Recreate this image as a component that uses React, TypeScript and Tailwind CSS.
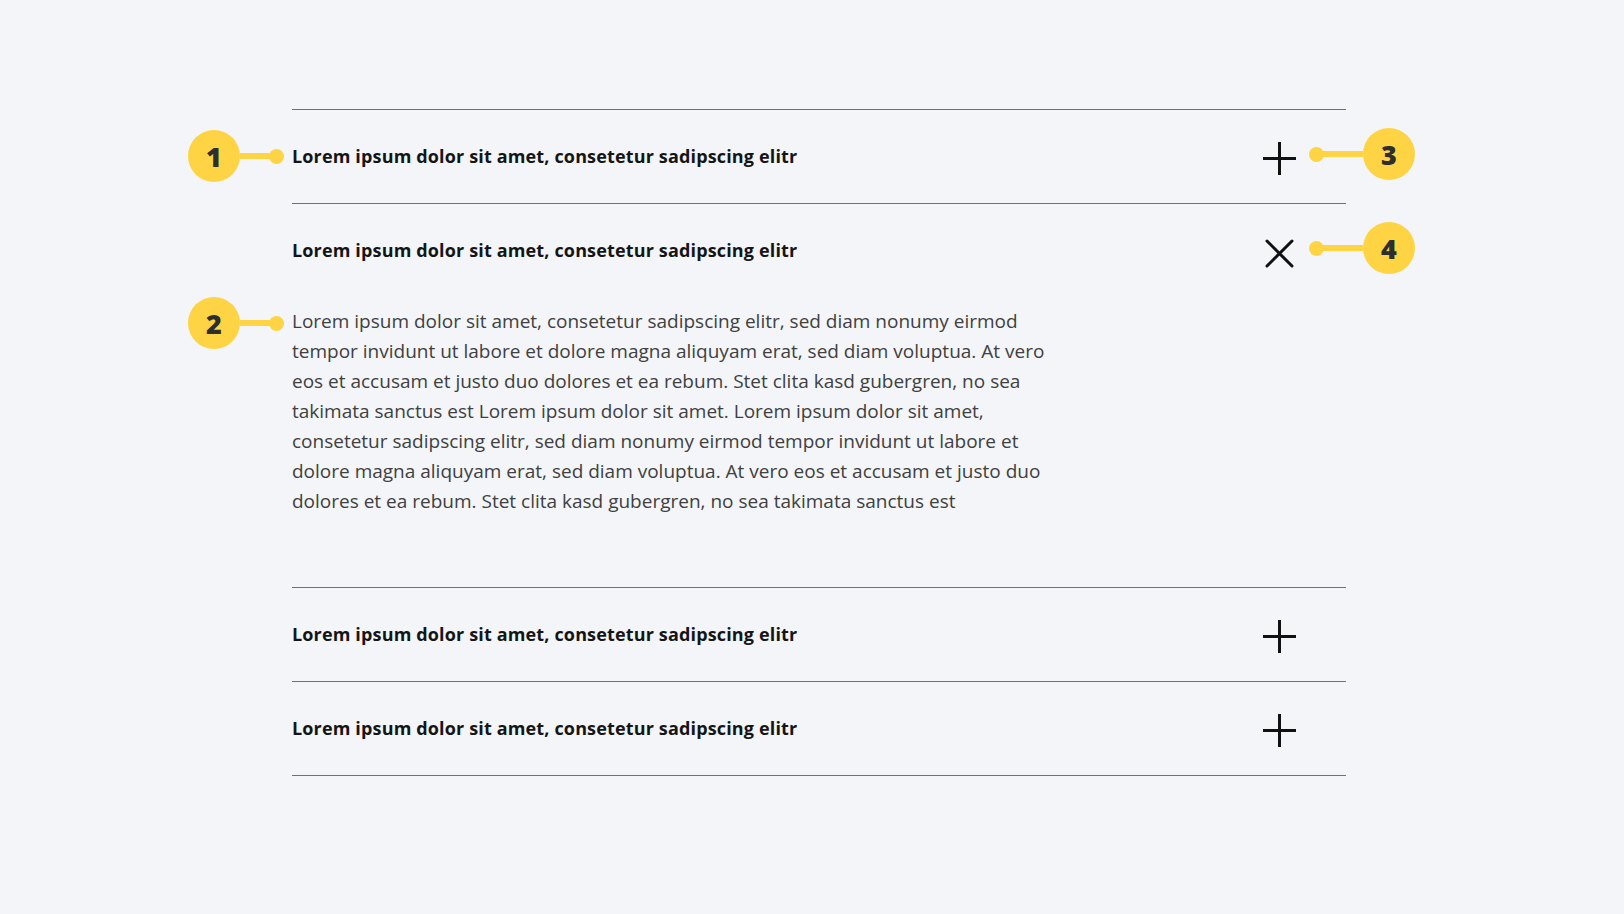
import React from 'react';

const body =
  'Lorem ipsum dolor sit amet, consetetur sadipscing elitr, sed diam nonumy eirmod tempor invidunt ut labore et dolore magna aliquyam erat, sed diam voluptua. At vero eos et accusam et justo duo dolores et ea rebum. Stet clita kasd gubergren, no sea takimata sanctus est Lorem ipsum dolor sit amet. Lorem ipsum dolor sit amet, consetetur sadipscing elitr, sed diam nonumy eirmod tempor invidunt ut labore et dolore magna aliquyam erat, sed diam voluptua. At vero eos et accusam et justo duo dolores et ea rebum. Stet clita kasd gubergren, no sea takimata sanctus est';

const title = 'Lorem ipsum dolor sit amet, consetetur sadipscing elitr';

const PlusIcon = () => (
  <svg className="mt-[4px]" width="33" height="33" viewBox="0 0 33 33" fill="none" stroke="#111" strokeWidth="3">
    <path d="M0 16.5h33M16.5 0v33" />
  </svg>
);

const CloseIcon = () => (
  <svg className="mt-[5px]" width="33" height="33" viewBox="0 0 33 33" fill="none" stroke="#111" strokeWidth="3" strokeLinecap="round">
    <path d="M4 4l25 25M29 4L4 29" />
  </svg>
);

const Circle = ({ n }: { n: string }) => (
  <div className="w-[52px] h-[52px] rounded-full bg-[#ffd444] flex items-center justify-center text-[27px] font-extrabold text-[#2e2e2e] leading-none">
    {n}
  </div>
);

// annotation markers sitting over the accordion
const Marker = ({ n, side, className }: { n: string; side: 'left' | 'right'; className: string }) => (
  <div className={`absolute flex items-center ${className}`}>
    {side === 'left' ? (
      <>
        <Circle n={n} />
        <div className="w-[31px] h-[6px] bg-[#ffd444] -mr-[2px]" />
        <div className="w-[15px] h-[15px] rounded-full bg-[#ffd444]" />
      </>
    ) : (
      <>
        <div className="w-[15px] h-[15px] rounded-full bg-[#ffd444]" />
        <div className="w-[41px] h-[6px] bg-[#ffd444] -ml-[2px]" />
        <Circle n={n} />
      </>
    )}
  </div>
);

const Row = ({ open, last }: { open?: boolean; last?: boolean }) => (
  <div className={`border-t border-[#707070] ${last ? 'border-b' : ''}`}>
    <div className="h-[93px] flex items-center justify-between pr-[50px]">
      <h3 className="text-[18px] font-bold text-[#151515] tracking-[0.15px]">{title}</h3>
      {open ? <CloseIcon /> : <PlusIcon />}
    </div>
    {open && (
      <p className="mt-[9px] pb-[71px] w-[775px] text-[19px] leading-[30px] text-[#404040]">{body}</p>
    )}
  </div>
);

export default function App() {
  return (
    <div className="min-h-screen bg-[#f3f5f9] pt-[109px] font-['Open_Sans',sans-serif]">
      <div className="relative ml-[292px] w-[1054px]">
        <Row />
        <Row open />
        <Row />
        <Row last />

        <Marker n="1" side="left" className="-left-[104px] top-[21px]" />
        <Marker n="2" side="left" className="-left-[104px] top-[188px]" />
        <Marker n="3" side="right" className="left-[1017px] top-[19px]" />
        <Marker n="4" side="right" className="left-[1017px] top-[113px]" />
      </div>
    </div>
  );
}
